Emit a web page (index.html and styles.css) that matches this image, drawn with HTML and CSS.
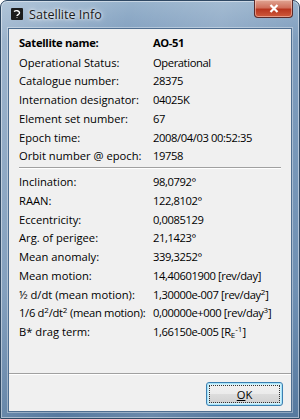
FILE: index.html
```html
<!DOCTYPE html>
<html lang="en">
<head>
  <meta charset="UTF-8">
  <title>Satellite Info</title>
  <link rel="stylesheet" href="styles.css">
</head>
<body>
  <div class="window">
    <!-- Title bar -->
    <div class="titlebar">
      <svg class="app-icon" width="12" height="12" viewBox="0 0 12 12">
        <rect x="0" y="0" width="12" height="12" rx="1" fill="#1c1c1c"/>
        <path d="M3 3.5 C5 2 8 2.5 8.5 4.5 C9 6.5 6 6.5 6 8 M6 9.5 L6 10" stroke="#fff" stroke-width="1.4" fill="none"/>
      </svg>
      <span class="title">Satellite Info</span>
      <div class="close">
        <svg width="10" height="9" viewBox="0 0 10 9">
          <path d="M1.5 1 L8.5 8 M8.5 1 L1.5 8" stroke="#fff" stroke-width="2.2"/>
        </svg>
      </div>
    </div>

    <!-- Client area -->
    <div class="client">
      <div class="info">
        <div class="row name"><span class="label">Satellite name:</span><span class="value">AO-51</span></div>
        <div class="row"><span class="label">Operational Status:</span><span class="value">Operational</span></div>
        <div class="row"><span class="label">Catalogue number:</span><span class="value">28375</span></div>
        <div class="row"><span class="label">Internation designator:</span><span class="value">04025K</span></div>
        <div class="row"><span class="label">Element set number:</span><span class="value">67</span></div>
        <div class="row"><span class="label">Epoch time:</span><span class="value">2008/04/03 00:52:35</span></div>
        <div class="row"><span class="label">Orbit number @ epoch:</span><span class="value">19758</span></div>

        <div class="divider"></div>

        <div class="row"><span class="label">Inclination:</span><span class="value">98,0792°</span></div>
        <div class="row"><span class="label">RAAN:</span><span class="value">122,8102°</span></div>
        <div class="row"><span class="label">Eccentricity:</span><span class="value">0,0085129</span></div>
        <div class="row"><span class="label">Arg. of perigee:</span><span class="value">21,1423°</span></div>
        <div class="row"><span class="label">Mean anomaly:</span><span class="value">339,3252°</span></div>
        <div class="row"><span class="label">Mean motion:</span><span class="value">14,40601900 [rev/day]</span></div>
        <div class="row"><span class="label">½ d/dt (mean motion):</span><span class="value">1,30000e-007 [rev/day<sup>2</sup>]</span></div>
        <div class="row"><span class="label tight">1/6 d<sup>2</sup>/dt<sup>2</sup> (mean motion):</span><span class="value">0,00000e+000 [rev/day<sup>3</sup>]</span></div>
        <div class="row"><span class="label">B* drag term:</span><span class="value">1,66150e-005 [R<sub>E</sub><sup>-1</sup>]</span></div>
      </div>

      <div class="footer">
        <button class="ok"><span class="focus"><u>O</u>K</span></button>
      </div>
    </div>
  </div>
</body>
</html>
```

FILE: styles.css
```css
/* Base */
* {
  margin: 0;
  padding: 0;
  box-sizing: border-box;
}
html, body {
  width: 300px;
  height: 419px;
  overflow: hidden;
  font-family: "Open Sans", "Noto Sans", sans-serif;
  font-size: 11.2px;
  color: #000;
  background: #fff;
}

/* Window frame */
.window {
  height: 419px;
  display: flex;
  flex-direction: column;
  padding: 0 7px 6px 7px;
  border: 1px solid #2f4863;
  border-radius: 7px 7px 0 0;
  background:
    linear-gradient(100deg, rgba(255, 255, 255, 0.25) 0%, rgba(255, 255, 255, 0) 35%, rgba(255, 255, 255, 0.12) 60%, rgba(255, 255, 255, 0) 80%),
    linear-gradient(to bottom, #97b2cc 0%, #7f9dbd 40px, #6f90b3 70%, #56799f 100%);
  box-shadow: inset 0 0 0 1px rgba(255, 255, 255, 0.45);
}

/* Title bar */
.titlebar {
  height: 27px;
  display: flex;
  align-items: center;
  gap: 6px;
  padding-left: 3px;
}
.app-icon {
  flex: none;
  margin-top: -1px;
}
.title {
  font-size: 12.6px;
  color: #1a1a1a;
  text-shadow: 0 0 6px #fff, 0 0 3px #fff;
  margin-top: -1px;
}
.close {
  margin-left: auto;
  margin-right: -1px;
  align-self: flex-start;
  margin-top: -1px;
  width: 39px;
  height: 18px;
  display: flex;
  align-items: center;
  justify-content: center;
  border: 1px solid #5a2a2a;
  border-top: none;
  border-radius: 0 0 4px 4px;
  background: linear-gradient(to bottom, #e0a593 0%, #d0705c 45%, #b8361f 55%, #cf5a3c 100%);
  box-shadow: inset 0 0 0 1px rgba(255, 220, 210, 0.5);
}

/* Client area */
.client {
  flex: 1;
  display: flex;
  flex-direction: column;
  background: #f0f0f0;
  border: 1px solid #4f6e90;
  box-shadow: 0 0 0 1px rgba(255, 255, 255, 0.35);
}
.info {
  padding: 4px 10px 0 10px;
}
.row {
  display: flex;
  height: 18.75px;
  line-height: 18.75px;
  white-space: nowrap;
}
.row.name {
  height: 20.5px;
  line-height: 20px;
  font-weight: bold;
  font-size: 11.2px;
  letter-spacing: -0.3px;
}
.label {
  width: 134px;
  flex: none;
}
.label.tight {
  letter-spacing: -0.3px;
}
.value {
  letter-spacing: -0.4px;
}
sup, sub {
  font-size: 8px;
  line-height: 0;
  letter-spacing: 0;
}
sup {
  vertical-align: 4px;
}
sub {
  vertical-align: -2px;
}

.divider {
  margin: 1px 0 4px 0;
  border-top: 1px solid #a0a0a0;
  border-bottom: 1px solid #fff;
}

/* Footer with OK button */
.footer {
  margin-top: auto;
  height: 38px;
  display: flex;
  justify-content: flex-end;
  align-items: flex-start;
  padding: 8px 8px 0 0;
  border-top: 1px solid #a0a0a0;
  box-shadow: inset 0 1px 0 #fff;
}
.ok {
  width: 77px;
  height: 24px;
  padding: 2px;
  font-family: inherit;
  font-size: 11.2px;
  color: #000;
  border: 1px solid #3c7fb1;
  border-radius: 3px;
  background: linear-gradient(to bottom, #f2f2f2 0%, #ebebeb 50%, #dddddd 50%, #cfcfcf 100%);
  box-shadow: inset 0 0 0 1px #a8e4f8, inset 0 0 0 2px #d3f1fb;
}
.focus {
  display: flex;
  align-items: center;
  justify-content: center;
  height: 100%;
  border: 1px dotted #333;
}
```
